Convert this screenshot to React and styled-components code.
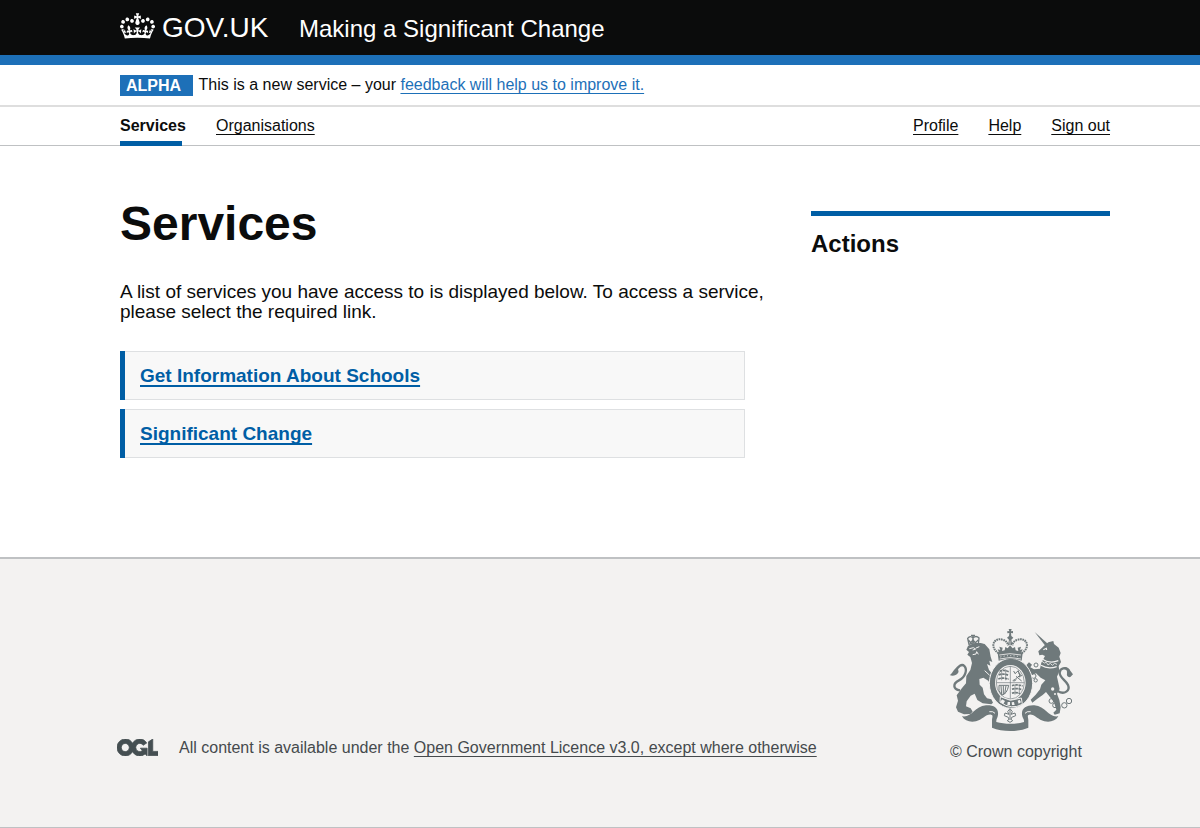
import React from "react";
import styled, { createGlobalStyle } from "styled-components";

const GlobalStyle = createGlobalStyle`
  *, *::before, *::after { box-sizing: border-box; }
  body {
    margin: 0;
    background: #fff;
    color: #0b0c0c;
    font: 16px/20px "Liberation Sans", Arial, sans-serif;
  }
  h1, h2, h3, p, ul { margin: 0; padding: 0; }
  ul { list-style: none; }
  svg { display: block; flex: none; }
`;

const Container = styled.div`
  width: 990px;
  margin-left: 120px;
`;

const Header = styled.header`
  height: 65px;
  background: #0b0c0c;
  border-bottom: 10px solid #1d70b8;
`;

const HeaderRow = styled(Container)`
  display: flex;
  align-items: flex-start;
  color: #fff;
`;

const Crown = styled.svg`
  width: 35px;
  height: 26px;
  margin-top: 13px;
`;

const LogoText = styled.span`
  width: 137px;
  margin-left: 7px;
  padding-top: 11px;
  font-size: 28px;
  line-height: 34px;
  letter-spacing: 0;
`;

const ServiceName = styled.span`
  padding-top: 14px;
  font-size: 24px;
  line-height: 30px;
`;

const PhaseBanner = styled.div`
  height: 42px;
  border-bottom: 2px solid #dedede;
`;

const PhaseRow = styled(Container)`
  display: flex;
  padding-top: 10px;
`;

const Tag = styled.strong`
  width: 73px;
  height: 21px;
  margin-right: 5.6px;
  padding-left: 6px;
  background: #1d70b8;
  color: #fff;
  line-height: 21px;
`;

const Link = styled.a`
  color: ${(p) => p.$color || "#0b0c0c"};
  text-decoration: underline;
  text-decoration-thickness: ${(p) => p.$thickness || 1}px;
  text-underline-offset: ${(p) => p.$offset || 3}px;
  text-decoration-skip-ink: none;
`;

const Nav = styled.nav`
  height: 39px;
  border-bottom: 1px solid #bfc1c3;
`;

const NavRow = styled(Container)`
  display: flex;
  gap: 30px;
  height: 39px;
  padding-top: 9px;
`;

const CurrentTab = styled.span`
  width: 66px;
  height: 30px;
  font-weight: 700;

  &::after {
    content: "";
    display: block;
    width: 62px;
    height: 5px;
    margin-top: 5px;
    background: #005ea5;
  }
`;

const AccountLinks = styled.div`
  display: flex;
  gap: 30px;
  margin-left: auto;
`;

const Main = styled.main`
  display: flex;
  justify-content: space-between;
  width: 990px;
  height: 411px;
  margin-left: 120px;
`;

const Content = styled.section`
  width: 660px;
  padding-top: 53px;
`;

const Title = styled.h1`
  font-size: 48px;
  line-height: 50px;
`;

const Intro = styled.p`
  margin-top: 33px;
  font-size: 19px;
  line-height: 20px;
`;

const ServiceList = styled.ul`
  display: grid;
  gap: 9px;
  width: 625px;
  margin-top: 29px;
`;

const ServiceCard = styled.li`
  height: 49px;
  border-left: 5px solid #005ea5;
`;

const ServiceBody = styled.div`
  height: 49px;
  padding: 13px 15px;
  border: 1px solid #dee0e2;
  border-left: 0;
  background: #f8f8f8;
  font-size: 19px;
  font-weight: 700;
  line-height: 22px;
`;

const Aside = styled.aside`
  width: 299px;
  height: 60px;
  margin-top: 65px;
  padding-top: 13px;
  border-top: 5px solid #005ea5;
`;

const AsideTitle = styled.h2`
  font-size: 24px;
  line-height: 30px;
`;

const Footer = styled.footer`
  height: 271px;
  border-top: 2px solid #bfc1c3;
  border-bottom: 1px solid #bfc1c3;
  background: #f3f2f1;
  color: #454a4d;
`;

const FooterRow = styled.div`
  display: flex;
  align-items: flex-end;
  height: 203px;
  padding-left: 117px;
`;

const Ogl = styled.svg`
  width: 41px;
  height: 17px;
  margin-bottom: 6px;
`;

const Licence = styled.p`
  width: 771px;
  margin-left: 21px;
  padding-bottom: 4px;
`;

const Copyright = styled.div`
  width: 140px;
`;

const Arms = styled.svg`
  width: 128px;
  height: 106px;
  margin: 0 0 9px -2px;
`;

const services = ["Get Information About Schools", "Significant Change"];

function CrownIcon() {
  return (
    <Crown viewBox="0 0 132 97" fill="currentColor" aria-hidden="true">
      <path d="M25 30.2c3.5 1.5 7.7-.2 9.1-3.7 1.5-3.6-.2-7.8-3.9-9.2-3.6-1.4-7.6.3-9.1 3.9-1.4 3.5.3 7.5 3.9 9zM9 39.5c3.6 1.5 7.8-.2 9.2-3.7 1.5-3.6-.2-7.8-3.9-9.1-3.6-1.5-7.6.2-9.1 3.8-1.4 3.5.3 7.5 3.8 9zM4.4 57.2c3.5 1.5 7.7-.2 9.1-3.8 1.5-3.6-.2-7.7-3.9-9.1-3.5-1.5-7.6.3-9.1 3.8-1.4 3.5.3 7.6 3.9 9.1zm38.3-21.4c3.5 1.5 7.7-.2 9.1-3.8 1.5-3.6-.2-7.7-3.9-9.1-3.6-1.5-7.6.3-9.1 3.8-1.3 3.6.4 7.7 3.9 9.1zm64.4-5.6c-3.6 1.5-7.8-.2-9.1-3.7-1.5-3.6.2-7.8 3.8-9.2 3.6-1.4 7.7.3 9.2 3.9 1.3 3.5-.4 7.5-3.9 9zm15.9 9.3c-3.6 1.5-7.7-.2-9.1-3.7-1.5-3.6.2-7.8 3.7-9.1 3.6-1.5 7.7.2 9.2 3.8 1.5 3.5-.3 7.5-3.8 9zm4.7 17.7c-3.6 1.5-7.8-.2-9.2-3.8-1.5-3.6.2-7.7 3.9-9.1 3.6-1.5 7.7.3 9.2 3.8 1.3 3.5-.4 7.6-3.9 9.1zM89.3 35.8c-3.6 1.5-7.8-.2-9.2-3.8-1.4-3.6.2-7.7 3.9-9.1 3.6-1.5 7.7.3 9.2 3.8 1.4 3.6-.3 7.7-3.9 9.1zM69.7 17.7l8.9 4.7V9.3l-8.9 2.8c-.2-.3-.5-.6-.9-.9L72.4 0H59.6l3.5 11.2c-.3.3-.6.5-.9.9l-8.8-2.8v13.1l8.8-4.7c.3.3.6.7.9.9l-5 15.4v.1c-.2.8-.4 1.6-.4 2.4 0 4.1 3.1 7.5 7 8.1h.2c.3 0 .7.1 1 .1.4 0 .7 0 1-.1h.2c4-.6 7.1-4.1 7.1-8.1 0-.8-.1-1.7-.4-2.4V34l-5.1-15.4c.4-.2.7-.6 1-.9zM66 92.8c16.9 0 32.8 1.1 47.1 3.2 4-16.9 8.9-26.7 14-33.5l-9.6-3.4c1 4.9 1.1 7.2 0 10.2-1.5-1.4-3-4.3-4.2-8.7L108.6 76c2.8-2 5-3.2 7.5-3.3-4.4 9.4-10 11.9-13.6 11.2-4.3-.8-6.3-4.6-5.6-7.9 1-4.7 5.7-5.9 8-.5 4.3-8.7-3-11.4-7.6-8.8 7.1-7.2 7.9-13.5 2.1-21.1-8 6.1-8.1 12.3-4.5 20.8-4.7-5.4-12.1-2.5-9.5 6.2 3.4-5.2 7.9-2 7.2 3.1-.6 4.3-6.4 7.8-13.5 7.2-10.3-.9-10.9-8-11.2-13.8 2.5-.5 7.1 1.8 11 7.3L80.2 60c-4.1 4.4-8 5.3-12.3 5.4 1.4-4.4 8-11.6 8-11.6H55.5s6.4 7.2 7.9 11.6c-4.2-.1-8-1-12.3-5.4l1.4 16.4c3.9-5.5 8.5-7.7 10.9-7.3-.3 5.8-.9 12.8-11.1 13.8-7.2.6-12.9-2.9-13.5-7.2-.7-5 3.8-8.3 7.1-3.1 2.7-8.7-4.6-11.6-9.4-6.2 3.7-8.5 3.6-14.7-4.6-20.8-5.8 7.6-5 13.9 2.2 21.1-4.7-2.6-11.9.1-7.7 8.8 2.3-5.5 7.1-4.2 8.1.5.7 3.3-1.3 7.1-5.7 7.9-3.5.7-9-1.8-13.5-11.2 2.5.1 4.7 1.3 7.5 3.3l-4.7-15.4c-1.2 4.4-2.7 7.2-4.3 8.7-1.1-3-.9-5.3 0-10.2l-9.5 3.4c5 6.9 9.9 16.7 14 33.5 14.8-2.1 30.8-3.2 47.7-3.2z" />
    </Crown>
  );
}

function OglLogo() {
  return (
    <Ogl viewBox="0 0 483.2 195.7" preserveAspectRatio="none" fill="#454f52" stroke="#454f52" strokeWidth="9" aria-hidden="true">
      <path d="M421.5 142.8V.1l-50.7 32.3v161.1h112.4v-50.7zm-122.3-9.6A47.12 47.12 0 0 1 221 97.8c0-26 21.1-47.1 47.1-47.1 16.7 0 31.4 8.7 39.7 21.8l42.7-27.2A97.63 97.63 0 0 0 268.1 0c-36.5 0-68.3 20.1-85.1 49.7A98 98 0 0 0 97.8 0C43.9 0 0 43.9 0 97.8s43.9 97.8 97.8 97.8c36.5 0 68.3-20.1 85.1-49.7a97.76 97.76 0 0 0 149.6 25.4l19.4 22.2h3v-87.8h-80l24.3 27.5zM97.8 145c-26 0-47.1-21.1-47.1-47.1s21.1-47.1 47.1-47.1 47.1 21.1 47.1 47.1S123.8 145 97.8 145" />
    </Ogl>
  );
}

function RoyalArms() {
  const ink = "#6f797b";
  const paper = "#f3f2f1";
  return (
    <Arms viewBox="24 21 384 318" fill={ink} stroke="none" aria-hidden="true">
      {/* motto ribbon */}
      <path d="M66 289c30 5 36-30 72-33 24-1 38 8 36 28-1 10-6 12-5 22 26 7 58 7 83 0 1-10-5-12-6-22-2-20 14-29 37-28 36 3 42 38 72 33-8 14-25 19-42 15-18-4-30-22-45-20-8 1-3 9-3 17v22c-30 13-78 13-109 0v-22c0-8 5-16-3-17-15-2-27 16-45 20-17 4-34-1-42-15z" />
      <path d="M148 275q12-2 17 5M272 275q-12-2-17 5" fill="none" stroke={paper} strokeWidth="3" />
      {/* lion crown */}
      <g fill="none" stroke={ink} strokeWidth="4">
        <path d="M87 73l-4-18q8-10 16-1 9-9 18 0l-2 18q-14-6-28 1zM99 44v27M93 46h12" />
        <path d="M85 60l7 8 7-8 7 8 9-8" />
      </g>
      {/* lion */}
      <path d="M84 78C95 68 122 66 134 72L148 88 152 110 157 126 148 122 151 137 141 132 147 150 160 166 169 190 163 216 151 211 152 196 145 182 130 173 118 177 119 194 128 203 132 223 141 235 154 238 159 248 154 253 128 250 112 240 104 221 92 227 80 244 78 259 92 265 98 275 91 282 72 283 54 275 48 262 54 242 50 226 66 204 78 190 79 168 91 150 96 129 91 111 82 104 87 96 79 89z" />
      <path d="M88 86l12-3 7 4-9 3M108 84l10-4M98 104l10-2 2-7 5 8M134 152l15 14" fill="none" stroke={paper} strokeWidth="3" />
      <path d="M60 211C38 208 38 190 57 181c19-9 26-32 16-43-8-8-19 2-25 13" fill="none" stroke={ink} strokeWidth="7" />
      <path d="M29 165c9-4 10-19 26-25-4 8 4 13-1 19-6 8-17 11-25 6z" />
      {/* unicorn */}
      <path d="M284 36l41 37-8 6z" />
      <path d="M295 94L314 76 325 67 340 63 342 72 356 83 362 99 358 110 363 126 356 138 358 154 351 170 355 188 359 207 351 221 358 240 362 262 359 280 344 284 340 278 349 269 342 247 328 229 318 216 308 225 292 236 277 248 272 239 287 224 300 208 304 194 316 181 302 173 288 160 276 165 263 151 260 134 267 127 276 134 271 142 282 148 300 146 304 128 315 108 307 104 298 106z" />
      <path d="M310 89l9-4 1 5M305 115q22 18 50 7M303 136q21 13 47 4" fill="none" stroke={paper} strokeWidth="3.5" />
      <path d="M306 124l7 5 6-2 5 8 7-5 6 6 7-6 7 3" fill="none" stroke={paper} strokeWidth="2.5" />
      <path d="M353 213c21 13 38-2 31-18-6-14-26-22-25-37 1-14 18-18 28-6" fill="none" stroke={ink} strokeWidth="7" />
      <path d="M372 142c10-5 18 8 27 21l-8 8c-7 2-12-4-10-11 1-8-3-14-9-18z" />
      {/* chain */}
      <g fill="none" stroke={ink} strokeWidth="3">
        <circle cx="288" cy="135" r="6" />
        <circle cx="281" cy="168" r="7" />
        <circle cx="287" cy="181" r="5" />
        <circle cx="334" cy="243" r="7" />
        <circle cx="345" cy="256" r="7" />
        <circle cx="373" cy="256" r="8" />
        <circle cx="387" cy="243" r="8" />
      </g>
      <circle cx="338" cy="207" r="5" fill={paper} />
      <circle cx="345" cy="222" r="3" fill={paper} />
      {/* garter and shield */}
      <ellipse cx="213" cy="190" rx="65" ry="75" fill={ink} stroke={paper} strokeWidth="3" />
      <ellipse cx="211" cy="188" rx="46" ry="53" fill={paper} />
      <ellipse cx="211" cy="188" rx="42" ry="49" fill="none" stroke={ink} strokeWidth="2" />
      <g fill="none" stroke={ink} strokeWidth="5">
        <path d="M211 138v98M169 188h84" strokeWidth="2" />
        <path d="M179 154q12-6 27 1M177 165q12-6 29 1M175 177q14-6 31 1" strokeDasharray="8 2" />
        <path d="M216 197q14-5 32 1M216 208q14-5 30 1M216 220q12-5 24 1" strokeDasharray="8 2" />
        <path d="M185 150v31M197 148v33M225 195v29M238 195v22" strokeWidth="2" />
        <path d="M221 153l4 8 10-9 2 10 8 5-11 3-8 8-8 4m10-13 17 14m-16-4-8 5M239 158v14" strokeWidth="3" />
        <path d="M177 196q-4 17 8 29 16-2 21-29zM183 198l2 25M190 197v27M198 197l-4 25" strokeWidth="3" />
      </g>
      <path d="M181 230l30 11 33-7 3 19q-33 18-67-7z" stroke={paper} strokeWidth="3" />
      <path d="M186 238l9 5-5 9-9-6zM203 246h7v9h-8zM215 247l7-1 2 9h-8zM233 242l6-3 4 8-7 4z" fill={paper} />
      {/* pendant */}
      <path d="M210 266l7 9-4 8 12-4 2 8-12 5-2 6 5 4-8 5-8-5 5-4-2-6-12-5 2-8 12 4-4-8z" fill={paper} stroke={ink} strokeWidth="3" />
      <path d="M210 270v30" stroke={ink} strokeWidth="3" />
      {/* main crown */}
      <path d="M206 27h9l-2 7 6-1v7l-6-1 1 9 6 5-6 6 3 16h-13l3-16-6-6 6-5 1-9-6 1v-7l6 1z" />
      <path d="M210 62v16" stroke={paper} strokeWidth="2" />
      <path d="M176 100C147 81 162 51 187 59q15 4 17 17M245 100c29-19 14-49-11-41q-15 4-17 17" fill="none" stroke={ink} strokeWidth="6" strokeDasharray="5 2" />
      <path d="M179 102l-6-14 8 2-3-10 10 3-2 10 8-2 2-10 7 4 7-9 8 9 7-4 2 10 8 2-2-10 10-3-3 10 8-2-6 14z" />
      <path d="M173 99q37-11 75 0l-3 23q-34-12-69 0z" />
      <path d="M178 105q32-8 65 0M179 117q31-9 64 0" fill="none" stroke={paper} strokeWidth="2.5" />
      <path d="M181 111q30-8 60 0" fill="none" stroke={paper} strokeWidth="3" strokeDasharray="3 7" />
    </Arms>
  );
}

export default function App() {
  return (
    <>
      <GlobalStyle />
      <Header>
        <HeaderRow>
          <CrownIcon />
          <LogoText>GOV.UK</LogoText>
          <ServiceName>Making a Significant Change</ServiceName>
        </HeaderRow>
      </Header>
      <PhaseBanner>
        <PhaseRow>
          <Tag>ALPHA</Tag>
          <p>
            This is a new service – your{" "}
            <Link href="#" $color="#1d70b8">feedback will help us to improve it.</Link>
          </p>
        </PhaseRow>
      </PhaseBanner>
      <Nav>
        <NavRow>
          <CurrentTab>Services</CurrentTab>
          <Link href="#">Organisations</Link>
          <AccountLinks>
            <Link href="#">Profile</Link>
            <Link href="#">Help</Link>
            <Link href="#">Sign out</Link>
          </AccountLinks>
        </NavRow>
      </Nav>
      <Main>
        <Content>
          <Title>Services</Title>
          <Intro>
            A list of services you have access to is displayed below. To access a service,
            <br />
            please select the required link.
          </Intro>
          <ServiceList>
            {services.map((name) => (
              <ServiceCard key={name}>
                <ServiceBody>
                  <Link href="#" $color="#005ea5" $thickness={2} $offset={3}>{name}</Link>
                </ServiceBody>
              </ServiceCard>
            ))}
          </ServiceList>
        </Content>
        <Aside>
          <AsideTitle>Actions</AsideTitle>
        </Aside>
      </Main>
      <Footer>
        <FooterRow>
          <OglLogo />
          <Licence>
            All content is available under the{" "}
            <Link href="#" $color="#454a4d">Open Government Licence v3.0, except where otherwise</Link>
          </Licence>
          <Copyright>
            <RoyalArms />
            <p>© Crown copyright</p>
          </Copyright>
        </FooterRow>
      </Footer>
    </>
  );
}
